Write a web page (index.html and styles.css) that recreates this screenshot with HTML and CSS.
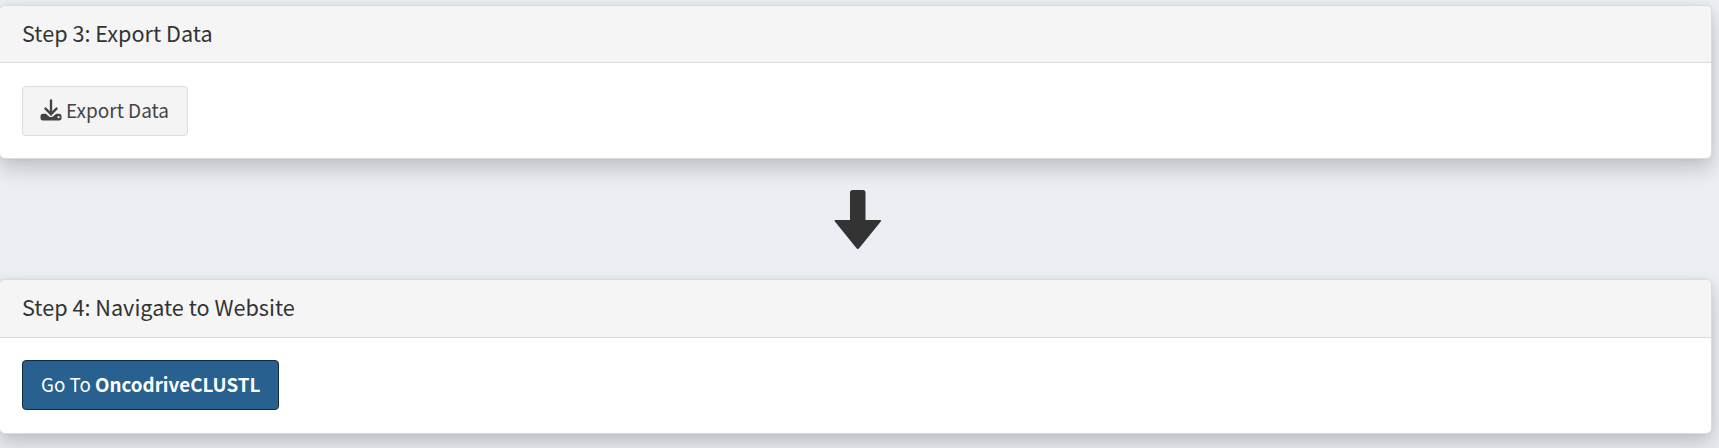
FILE: index.html
```html
<!DOCTYPE html>
<html lang="en">
<head>
<meta charset="utf-8">
<title>Export Data</title>
<link rel="stylesheet" href="styles.css">
</head>
<body>
<main class="steps">
  <section class="panel">
    <h2 class="panel-heading"><span>Step 3: Export Data</span></h2>
    <div class="panel-body">
      <button class="btn btn-default" type="button">
        <svg class="btn-icon" viewBox="0 0 22 22" aria-hidden="true">
          <path class="icon-stroke" d="M11 1.400V15.500M5.500 9.600 11 15.200l5.500-5.600"/>
          <path fill-rule="evenodd" d="M3 14.700h2.800l3 2.500q2.200 1.700 4.400 0l3-2.500H19q2.500 0 2.500 2.500v1.700q0 2.500-2.500 2.500H3q-2.500 0-2.500-2.500v-1.700q0-2.500 2.500-2.500zM18.600 17a1.150 1.150 0 1 0 0 2.300 1.150 1.150 0 0 0 0-2.300z"/>
        </svg>
        <span>Export Data</span>
      </button>
    </div>
  </section>
  <div class="arrow-row">
    <svg class="arrow" viewBox="0 0 48 60" aria-hidden="true">
      <path d="M18.500 0h10.500q2.500 0 2.500 2.500V30H46q2 0 .8 1.500L25.300 58q-1.500 1.800-3 0L.9 31.500Q-.3 30 1.500 30H16V2.500Q16 0 18.500 0z"/>
    </svg>
  </div>
  <section class="panel panel-next">
    <h2 class="panel-heading"><span>Step 4: Navigate to Website</span></h2>
    <div class="panel-body">
      <button class="btn btn-primary" type="button"><span>Go To <b>OncodriveCLUSTL</b></span></button>
    </div>
  </section>
</main>
</body>
</html>
```
FILE: styles.css
```css
* { box-sizing: border-box; }
body {
  margin: 0;
  height: 448px;
  overflow: hidden;
  background: #ebeff4;
  color: #333;
  font-family: "Noto Sans CJK SC", "Open Sans", sans-serif;
}
.steps {
  display: flex;
  flex-direction: column;
  padding: 5px 7px 0 0;
}
.panel {
  height: 154px;
  margin-left: -1px;
  border: 1px solid #d9dbdd;
  border-radius: 6px;
  background: #fff;
  box-shadow: 0 10px 20px rgba(0, 0, 0, .19), 0 0 6px rgba(0, 0, 0, .05);
}
.panel-heading {
  display: flex;
  align-items: center;
  height: 57px;
  margin: 0;
  padding: 0 22px 2px;
  border-bottom: 1px solid #d9dbdd;
  border-radius: 5px 5px 0 0;
  background: #f5f5f5;
  font-size: 21.65px;
  font-weight: 400;
  line-height: 30px;
}
.panel-body { padding: 23px 22px; }
.panel-next { height: 155px; }
.panel-next .panel-heading {
  height: 58px;
  padding-bottom: 4px;
}
.panel-next .panel-body { padding-top: 22px; }
.btn {
  display: flex;
  align-items: center;
  height: 50px;
  padding: 0 18px 2px;
  border: 1px solid #ddd;
  border-radius: 4px;
  font-family: inherit;
  font-size: 18.8px;
  line-height: 28px;
  white-space: nowrap;
}
.btn-default {
  width: 166px;
  gap: 4px;
  padding-left: 17px;
  background: #f4f4f4;
  color: #444;
  font-size: 19px;
}
.btn-primary {
  width: 257px;
  border-color: #122b40;
  background: #286090;
  color: #fff;
}
.btn-icon {
  width: 22px;
  height: 22px;
  flex: none;
  fill: currentColor;
}
.icon-stroke {
  fill: none;
  stroke: currentColor;
  stroke-width: 2.4;
  stroke-linecap: round;
  stroke-linejoin: round;
}
.arrow-row {
  display: flex;
  justify-content: center;
  height: 120px;
  padding: 31px 0 0 3px;
}
.arrow {
  width: 48px;
  height: 60px;
  fill: #333;
}
```
